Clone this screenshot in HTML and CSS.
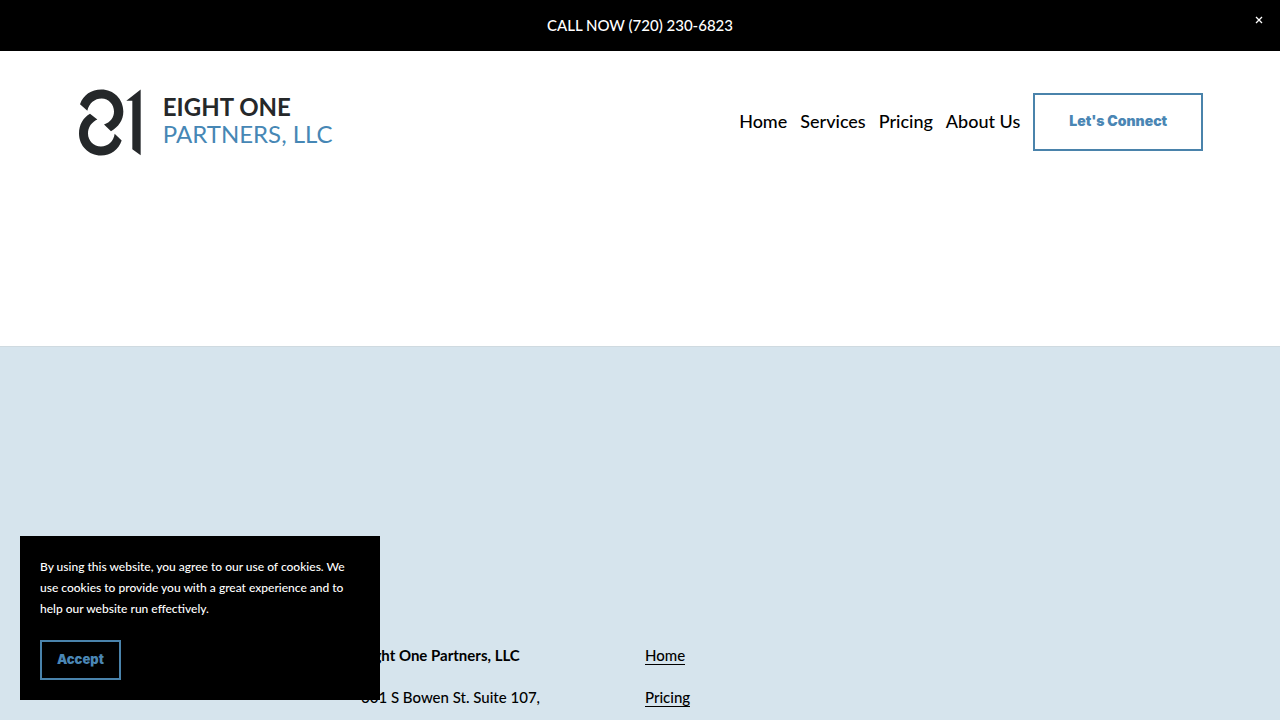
FILE: index.html
```html
<!DOCTYPE html>
<html lang="en">
<head>
<meta charset="utf-8">
<meta name="viewport" content="width=device-width, initial-scale=1">
<title>Eight One Partners, LLC</title>
<link rel="stylesheet" href="styles.css">
</head>
<body>
<div class="announcement">
  <a class="announcement-link" href="tel:7202306823">CALL NOW (720) 230-6823</a>
  <button class="announcement-close" type="button" aria-label="Close announcement">
    <svg width="8" height="8" viewBox="0 0 8 8" aria-hidden="true"><path d="M1 1l6 6M7 1l-6 6" stroke="#fff" stroke-width="1.3"/></svg>
  </button>
</div>
<header class="header">
  <a class="logo" href="#" aria-label="Eight One Partners, LLC">
    <svg class="logo-mark" width="62" height="67" viewBox="27 27 186 200" fill="#25282a" aria-hidden="true">
      <path d="M30 72C40 44 64 28 94 28C131 28 160 57 160 94C160 120 145 141 123 153L102 133C121 127 132 112 132 94C132 73 116 55 95 55C74 55 57 69 52 92Z"/>
      <path d="M60 101C40 112 27 134 27 160C27 197 56 226 93 226C122 226 146 208 155 181L134 161C131 184 114 199 93 199C71 199 54 182 54 160C54 141 65 126 82 118Z"/>
      <path d="M212 28V225L187 207V62H169Z"/>
    </svg>
    <span class="logo-text">
      <span class="logo-top">EIGHT ONE</span>
      <span class="logo-bottom">PARTNERS, LLC</span>
    </span>
  </a>
  <div class="header-actions">
    <nav class="nav">
      <a href="#">Home</a>
      <a href="#">Services</a>
      <a href="#">Pricing</a>
      <a href="#">About Us</a>
    </nav>
    <a class="button connect" href="#">Let's Connect</a>
  </div>
</header>
<main class="page"></main>
<footer class="footer">
  <div class="footer-address">
    <p><strong>Eight One Partners, LLC</strong></p>
    <p>601 S Bowen St. Suite 107,</p>
  </div>
  <div class="footer-links">
    <p><a href="#">Home</a></p>
    <p><a href="#">Pricing</a></p>
  </div>
</footer>
<section class="cookie" aria-label="Cookie notice">
  <p>By using this website, you agree to our use of cookies. We use cookies to provide you with a great experience and to help our website run effectively.</p>
  <button class="button accept" type="button">Accept</button>
</section>
</body>
</html>
```
FILE: styles.css
```css
* { box-sizing: border-box; }
body {
  margin: 0;
  background: #fff;
  color: #000;
  font-family: Lato, "Liberation Sans", sans-serif;
  font-weight: 500;
  display: flex;
  flex-direction: column;
  min-height: 100vh;
}
a { color: inherit; text-decoration: none; }
p { margin: 0; }
.announcement {
  position: relative;
  background: #000;
  color: #fff;
  text-align: center;
  padding: 14px 48px;
  font-size: 15px;
  line-height: 23px;
}
.announcement-close {
  position: absolute;
  top: 8px;
  right: 9px;
  width: 24px;
  height: 24px;
  padding: 0;
  border: 0;
  background: none;
  display: grid;
  place-items: center;
}
.header {
  display: flex;
  align-items: center;
  justify-content: space-between;
  padding: 38px 6vw;
}
.logo { display: flex; align-items: center; gap: 22px; padding-left: 2px; }
.logo-mark { display: block; }
.logo-text { display: flex; flex-direction: column; padding-bottom: 5px; line-height: 27px; font-size: 24px; }
.logo-top { color: #25282a; font-weight: 700; }
.logo-bottom { color: #4687b5; font-weight: 400; }
.header-actions { display: flex; align-items: center; gap: 13px; padding-bottom: 1px; }
.nav { display: flex; gap: 13px; padding-bottom: 2px; font-size: 18px; line-height: 28px; }
.button {
  border: 2px solid #4a83ab;
  color: #4a86b4;
  background: transparent;
  font-family: Inter, "Liberation Sans", sans-serif;
  font-weight: 900;
  text-align: center;
}
.connect { padding: 16px 34px 18px; font-size: 14px; line-height: 20px; }
.page { min-height: 152px; }
.footer {
  flex: 1;
  background: #d6e4ed;
  border-top: 1px solid #cfdae0;
  display: grid;
  grid-template-columns: 284px 1fr;
  padding: 296px 6vw 0 361px;
  font-size: 15px;
  line-height: 24px;
}
.footer-address, .footer-links { display: flex; flex-direction: column; gap: 18px; }
.footer-links a { border-bottom: 1px solid #000; }
.cookie {
  position: fixed;
  left: 20px;
  bottom: 20px;
  width: 360px;
  padding: 20px;
  background: #000;
  color: #fff;
  font-size: 12px;
  line-height: 21px;
}
.accept { display: block; margin-top: 21px; height: 40px; padding: 0 15px 2px; font-size: 13px; }
```
